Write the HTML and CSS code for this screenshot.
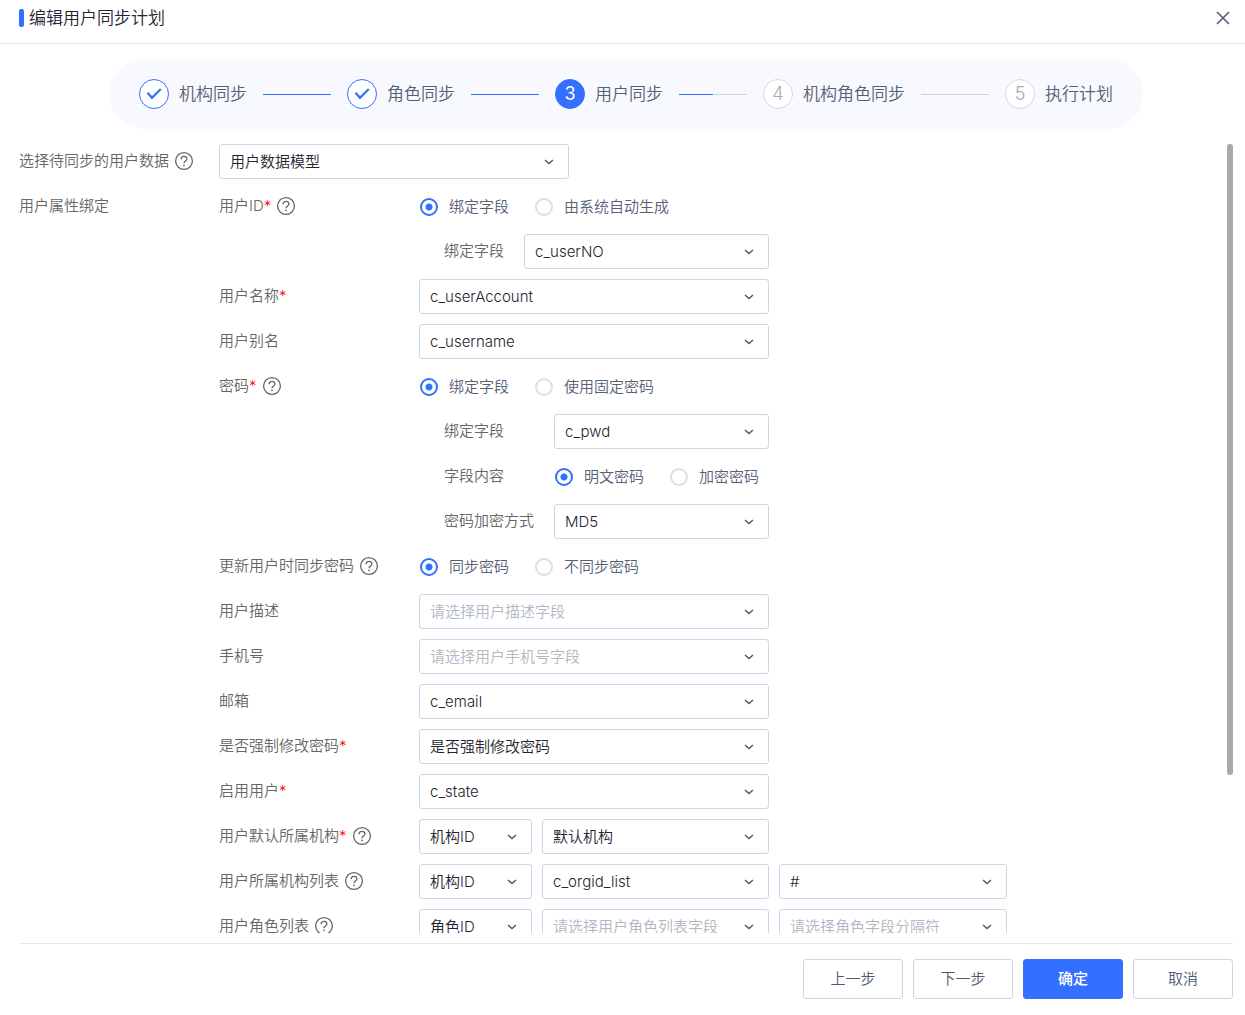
FILE: index.html
```html
<!DOCTYPE html>
<html lang="zh-CN">
<head>
	<meta charset="utf-8">
	<meta name="viewport" content="width=device-width, initial-scale=1">
	<title>编辑用户同步计划</title>
	<link rel="stylesheet" href="styles.css">
</head>
<body>
<svg class="defs" aria-hidden="true">
  <symbol id="icon-help" viewBox="0 0 20 20">
    <circle cx="10" cy="10" r="8.4" fill="none" stroke="currentColor" stroke-width="1.3"/>
    <path d="M7.1 8.2C7.1 6.3 8.4 5.3 10 5.3S12.9 6.3 12.9 8C12.9 9.9 10 10 10 12.2" fill="none" stroke="currentColor" stroke-width="1.3"/>
    <circle cx="10" cy="14.3" r="0.9" fill="currentColor"/>
  </symbol>
  <symbol id="icon-check" viewBox="0 0 16 16">
    <path d="M1.5 6.8L6 11.8L14.8 3" fill="none" stroke="currentColor" stroke-width="2.2"/>
  </symbol>
</svg>

<header class="header">
  <h1 class="title">编辑用户同步计划</h1>
  <button class="close" aria-label="关闭">
    <svg viewBox="0 0 14 14" width="14" height="14"><path d="M1 1L13 13M13 1L1 13" fill="none" stroke="currentColor" stroke-width="1.5"/></svg>
  </button>
</header>

<main class="content">
  <ol class="steps">
    <li class="step done"><span class="num"><svg width="16" height="16"><use href="#icon-check"/></svg></span>机构同步</li>
    <li class="line full"></li>
    <li class="step done"><span class="num"><svg width="16" height="16"><use href="#icon-check"/></svg></span>角色同步</li>
    <li class="line full"></li>
    <li class="step current"><span class="num">3</span>用户同步</li>
    <li class="line half"></li>
    <li class="step"><span class="num">4</span>机构角色同步</li>
    <li class="line"></li>
    <li class="step"><span class="num">5</span>执行计划</li>
  </ol>

  <div class="scroll">
  <form class="form" id="plan-form">
    <div class="row">
      <label class="label" for="source">选择待同步的用户数据<svg class="help"><use href="#icon-help"/></svg></label>
      <div class="field"><select id="source"><option>用户数据模型</option></select></div>
    </div>

    <div class="row">
      <div class="label">用户属性绑定</div>
      <div class="rows">
        <div class="row">
          <div class="label">用户ID<i>*</i><svg class="help"><use href="#icon-help"/></svg></div>
          <div class="rows">
            <div class="radios">
              <label><input type="radio" name="id-mode" checked>绑定字段</label>
              <label><input type="radio" name="id-mode">由系统自动生成</label>
            </div>
            <div class="subrow short">
              <label class="label" for="id-field">绑定字段</label>
              <select id="id-field"><option>c_userNO</option></select>
            </div>
          </div>
        </div>
        <div class="row">
          <label class="label" for="name">用户名称<i>*</i></label>
          <div class="field"><select id="name"><option>c_userAccount</option></select></div>
        </div>
        <div class="row">
          <label class="label" for="alias">用户别名</label>
          <div class="field"><select id="alias"><option>c_username</option></select></div>
        </div>
        <div class="row">
          <div class="label">密码<i>*</i><svg class="help"><use href="#icon-help"/></svg></div>
          <div class="rows">
            <div class="radios">
              <label><input type="radio" name="pwd-mode" checked>绑定字段</label>
              <label><input type="radio" name="pwd-mode">使用固定密码</label>
            </div>
            <div class="subrow">
              <label class="label" for="pwd-field">绑定字段</label>
              <select id="pwd-field"><option>c_pwd</option></select>
            </div>
            <div class="subrow">
              <div class="label">字段内容</div>
              <div class="radios">
                <label><input type="radio" name="pwd-content" checked>明文密码</label>
                <label><input type="radio" name="pwd-content">加密密码</label>
              </div>
            </div>
            <div class="subrow">
              <label class="label" for="pwd-algo">密码加密方式</label>
              <select id="pwd-algo"><option>MD5</option></select>
            </div>
          </div>
        </div>
        <div class="row">
          <div class="label">更新用户时同步密码<svg class="help"><use href="#icon-help"/></svg></div>
          <div class="radios">
            <label><input type="radio" name="pwd-sync" checked>同步密码</label>
            <label><input type="radio" name="pwd-sync">不同步密码</label>
          </div>
        </div>
        <div class="row">
          <label class="label" for="desc">用户描述</label>
          <div class="field"><select id="desc" class="empty"><option value="">请选择用户描述字段</option></select></div>
        </div>
        <div class="row">
          <label class="label" for="phone">手机号</label>
          <div class="field"><select id="phone" class="empty"><option value="">请选择用户手机号字段</option></select></div>
        </div>
        <div class="row">
          <label class="label" for="email">邮箱</label>
          <div class="field"><select id="email"><option>c_email</option></select></div>
        </div>
        <div class="row">
          <label class="label" for="force">是否强制修改密码<i>*</i></label>
          <div class="field"><select id="force"><option>是否强制修改密码</option></select></div>
        </div>
        <div class="row">
          <label class="label" for="state">启用用户<i>*</i></label>
          <div class="field"><select id="state"><option>c_state</option></select></div>
        </div>
        <div class="row">
          <label class="label" for="org">用户默认所属机构<i>*</i><svg class="help"><use href="#icon-help"/></svg></label>
          <div class="triple">
            <select id="org"><option>机构ID</option></select>
            <select aria-label="默认机构"><option>默认机构</option></select>
          </div>
        </div>
        <div class="row">
          <label class="label" for="orgs">用户所属机构列表<svg class="help"><use href="#icon-help"/></svg></label>
          <div class="triple">
            <select id="orgs"><option>机构ID</option></select>
            <select aria-label="机构列表字段"><option>c_orgid_list</option></select>
            <select aria-label="机构字段分隔符"><option>#</option></select>
          </div>
        </div>
        <div class="row">
          <label class="label" for="roles">用户角色列表<svg class="help"><use href="#icon-help"/></svg></label>
          <div class="triple">
            <select id="roles"><option>角色ID</option></select>
            <select class="empty" aria-label="角色列表字段"><option value="">请选择用户角色列表字段</option></select>
            <select class="empty" aria-label="角色字段分隔符"><option value="">请选择角色字段分隔符</option></select>
          </div>
        </div>
      </div>
    </div>
  </form>
  <div class="thumb"></div>
  </div>
</main>

<footer class="footer">
  <button>上一步</button>
  <button>下一步</button>
  <button class="primary" type="submit" form="plan-form">确定</button>
  <button>取消</button>
</footer>
</body>
</html>
```
FILE: styles.css
```css
* {
  box-sizing: border-box;
}

body {
  display: flex;
  flex-direction: column;
  height: 100vh;
  margin: 0;
  background: #fff;
  color: #666;
  font-family: Inter, "Noto Sans CJK SC", sans-serif;
  font-size: 15px;
  font-weight: 350;
  line-height: 20px;
}

button, select, input {
  font: inherit;
}

.defs {
  display: none;
}

/* header */
.header {
  display: flex;
  flex: none;
  justify-content: space-between;
  align-items: center;
  height: 44px;
  padding: 0 14px 8px 19px;
  border-bottom: 1px solid #e8e9ec;
}

.title {
  display: flex;
  align-items: center;
  gap: 5px;
  margin: 0;
  color: #1f2430;
  font-size: 17px;
  font-weight: 350;
}

.title::before {
  content: "";
  width: 5px;
  height: 18px;
  border-radius: 2px;
  background: #3370ff;
}

.close {
  display: flex;
  padding: 1px;
  border: 0;
  background: none;
  color: #4e5a70;
}

/* steps */
.content {
  display: flex;
  flex: 1;
  flex-direction: column;
  gap: 15px;
  min-height: 0;
  padding: 15px 12px 10px 19px;
}

.steps {
  display: flex;
  flex: none;
  align-items: center;
  gap: 16px;
  height: 70px;
  margin: 0 90px;
  padding: 0 30px;
  border-radius: 35px;
  background: #f8f9ff;
  color: #566074;
  font-size: 17px;
  list-style: none;
}

.step {
  display: flex;
  align-items: center;
  gap: 10px;
  white-space: nowrap;
}

.num {
  display: flex;
  justify-content: center;
  align-items: center;
  width: 30px;
  height: 30px;
  border: 1px solid #d5d9e6;
  border-radius: 50%;
  background: #fff;
  color: #a4abb8;
  font-size: 18px;
  font-weight: 300;
}

.done .num {
  border-color: #3370ff;
  color: #3370ff;
}

.current .num {
  border-color: #3370ff;
  background: #3370ff;
  color: #fff;
  font-weight: 400;
}

.line {
  flex: 1;
  height: 1px;
  background: #d0d4de;
}

.line.full {
  background: #3370ff;
}

.line.half {
  background: linear-gradient(to right, #3370ff 50%, #d0d4de 50%);
}

/* form */
.scroll {
  position: relative;
  display: flex;
  flex: 1;
  min-height: 0;
}

.form {
  display: flex;
  flex: 1;
  flex-direction: column;
  gap: 10px;
  overflow-y: auto;
  scrollbar-width: none;
}

.form::after {
  content: "";
  flex: none;
  height: 173px;
}

.thumb {
  position: absolute;
  top: 0;
  right: 0;
  width: 6px;
  height: 80%;
  border-radius: 3px;
  background: #a9a9a9;
}

.row {
  display: grid;
  grid-template-columns: 200px minmax(0, 1fr);
}

.rows {
  display: grid;
  gap: 10px;
}

.label {
  display: flex;
  align-items: center;
  height: 34px;
  white-space: nowrap;
}

.label i {
  color: #f00;
  font-style: normal;
}

.help {
  width: 20px;
  height: 20px;
  margin-left: 5px;
}

.field {
  max-width: 350px;
}

select {
  width: 100%;
  height: 35px;
  padding: 0 30px 0 10px;
  border: 1px solid #d0d4e6;
  border-radius: 3px;
  appearance: none;
  background: #fff url("data:image/svg+xml,%3Csvg xmlns='http://www.w3.org/2000/svg' width='10' height='6'%3E%3Cpath d='M1 1L5 4.6L9 1' fill='none' stroke='%234e5a70' stroke-width='1.5'/%3E%3C/svg%3E") no-repeat right 14px center;
  color: #1f2430;
}

select.empty {
  color: #b0b8c5;
}

.subrow {
  display: grid;
  grid-template-columns: 110px 1fr;
  width: 350px;
  padding-left: 25px;
}

.subrow.short {
  grid-template-columns: 80px 1fr;
}

.triple {
  display: grid;
  grid-template-columns: 113px 227px 228px;
  gap: 10px;
}

.radios {
  display: flex;
  align-items: center;
  gap: 25px;
  height: 35px;
  color: #566074;
}

.radios label {
  display: flex;
  align-items: center;
  gap: 10px;
  white-space: nowrap;
}

.radios input {
  width: 18px;
  height: 18px;
  margin: 0 1px;
  border: 2px solid #dcdfea;
  border-radius: 50%;
  appearance: none;
  background: #fff;
}

.radios input:checked {
  border-color: #3370ff;
  background: radial-gradient(circle, #3370ff 3px, #fff 4px);
}

/* footer */
.footer {
  display: flex;
  flex: none;
  justify-content: flex-end;
  gap: 10px;
  margin: 0 12px 0 19px;
  padding: 15px 0 16px;
  border-top: 1px solid #e8e9ec;
}

.footer button {
  width: 100px;
  height: 40px;
  border: 1px solid #d0d4e6;
  border-radius: 3px;
  background: #fff;
  color: #4e5a70;
}

.footer .primary {
  border-color: #3370ff;
  background: #3370ff;
  color: #fff;
  font-weight: 500;
}
```
